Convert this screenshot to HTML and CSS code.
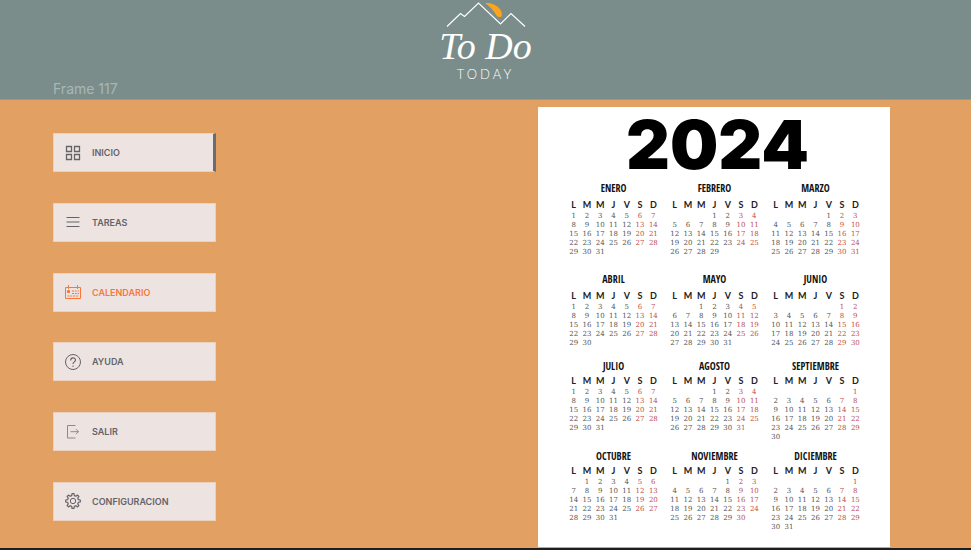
FILE: index.html
```html
<!DOCTYPE html>
<html lang="es">
<head>
<meta charset="utf-8">
<title>To Do Today</title>
<link rel="stylesheet" href="styles.css">
</head>
<body>
<header class="header">
  <span class="frame-label">Frame 117</span>
  <div class="logo">
    <svg class="logo-art" viewBox="0 0 80 26" aria-hidden="true">
      <path d="M39 1C49 0 58 8 55.500 14.500Q52 16 50.500 13.500Q47 7 39 1Z" fill="#fba51c"/>
      <path d="M1 24.500L14.500 11.500L18.500 14.500L32.500 1L54.500 22L65 11.500L79 24.500" fill="none" stroke="#fff" stroke-width="1.200"/>
    </svg>
    <span class="logo-name">To Do</span>
    <span class="logo-sub">TODAY</span>
  </div>
</header>
<main class="main">
  <nav class="nav" aria-label="Principal">
    <a class="nav-link nav-link--marked" href="#inicio">
      <svg class="icon" viewBox="0 0 16 16"><path d="M1.500 1.500h5v5h-5zM9.500 1.500h5v5h-5zM1.500 9.500h5v5h-5zM9.500 9.500h5v5h-5z" stroke-width="1.300"/></svg>INICIO</a>
    <a class="nav-link" href="#tareas">
      <svg class="icon" viewBox="0 0 16 16"><path d="M1.500 3.500h13M1.500 8h13M1.500 12.500h13"/></svg>TAREAS</a>
    <a class="nav-link nav-link--current" href="#calendario" aria-current="page">
      <svg class="icon" viewBox="0 0 16 16"><path d="M.5 3.500h15v11H.5zM3.500 1v4M12.500 1v4"/><path d="M2.500 6.500h2v2h-2z" fill="currentColor"/><path d="M7 7h7M7 9.500h7M2.500 12h11.500" stroke-dasharray="2 .8"/></svg>CALENDARIO</a>
    <a class="nav-link" href="#ayuda">
      <svg class="icon" viewBox="0 0 16 16"><circle cx="8" cy="8" r="7.500"/><path d="M5.700 6.500C5.700 3 10.500 3.200 10.500 6C10.500 8 8 7.800 8 10M8 11.500v1.300" stroke-width="1.200"/></svg>AYUDA</a>
    <a class="nav-link" href="#salir">
      <svg class="icon icon--thin" viewBox="0 0 16 16"><path d="M10.500 1.500h-8v12.500h8M5.500 7.700h8M11 5.200l2.500 2.500L11 10.200"/></svg>SALIR</a>
    <a class="nav-link" href="#configuracion">
      <svg class="icon" viewBox="0 0 16 16"><circle cx="8" cy="8" r="2.700"/><path stroke-linejoin="round" stroke-width="1.200" d="M6.700 2.600L7 .7h2l.3 1.900 1.600.7 1.600-1.200 1.400 1.400-1.200 1.600.7 1.600 1.900.3v2l-1.900.3-.7 1.600 1.200 1.600-1.400 1.400-1.600-1.200-1.600.7L9 15.300H7l-.3-1.900-1.600-.7-1.600 1.200-1.400-1.400 1.200-1.600-.7-1.600L.7 9V7l1.900-.3.7-1.600-1.200-1.600 1.400-1.400 1.600 1.200z"/></svg>CONFIGURACION</a>
  </nav>
  <section class="calendar">
    <h1 class="year">2024</h1>
    <div class="months" id="months"></div>
  </section>
</main>
<script src="calendar.js"></script>
</body>
</html>
```
FILE: styles.css
```css
* {
  box-sizing: border-box;
}

body {
  margin: 0;
  min-height: 100vh;
  display: flex;
  flex-direction: column;
  background: #e2a163;
  border-bottom: 2px solid #1e1e1e;
  font-family: Inter, sans-serif;
}

.header {
  display: grid;
  grid-template-columns: 1fr auto 1fr;
  min-height: 100px;
  padding: 2px 53px 0;
  background: #7a8d8b;
  border-bottom: 1px solid #a3967a;
}

.frame-label {
  align-self: end;
  font-size: 14px;
  line-height: 20px;
  color: #a8b7b5;
}

.logo {
  display: flex;
  flex-direction: column;
  align-items: center;
  color: #fff;
}

.logo-art {
  width: 80px;
  height: 26px;
}

.logo-name {
  font: italic 38px/36px "Liberation Serif", serif;
}

.logo-sub {
  font: 300 13px/20px Lato, sans-serif;
  letter-spacing: 3px;
}

.main {
  flex: 1;
  display: flex;
  justify-content: space-between;
  padding: 7px 81px 1px 53px;
}

.nav {
  display: flex;
  flex-direction: column;
  justify-content: space-between;
  width: 163px;
  padding: 26px 0;
}

.nav-link {
  display: flex;
  align-items: center;
  gap: 11px;
  height: 39px;
  padding-left: 11px;
  background: #ede4e2;
  border: 1px solid #ead0bd;
  color: #646369;
  font-size: 9px;
  font-weight: 600;
  text-decoration: none;
}

.nav-link--marked {
  border-right: 3px solid #6c6b73;
}

.nav-link--current {
  color: #f9763c;
}

.icon {
  width: 16px;
  height: 16px;
  fill: none;
  stroke: currentColor;
}

.icon--thin {
  opacity: 0.7;
}

.calendar {
  width: 352px;
  padding: 5px 28px 0 29px;
  background: #fff;
}

.year {
  margin: 0;
  padding-left: 6px;
  font-size: 68px;
  line-height: 64px;
  font-weight: 900;
  text-align: center;
  color: #000;
}

.months {
  display: grid;
  grid-template-columns: repeat(3, 1fr);
  grid-template-rows: 91px 87px 90px 84px;
  column-gap: 8px;
  padding-top: 6px;
}

.month {
  width: 100%;
  height: 0;
  align-self: start;
  table-layout: fixed;
  border-collapse: collapse;
  font-family: "DejaVu Serif", serif;
}

.month caption {
  height: 15px;
  font: 700 10px/12px "Liberation Sans Narrow", "Open Sans Condensed", "Liberation Sans", sans-serif;
  color: #111;
}

.month th {
  height: 15px;
  padding: 0;
  font: 700 9px/15px Lato, sans-serif;
  color: #222;
}

.month td {
  height: 9px;
  padding: 0;
  font-size: 7px;
  line-height: 9px;
  text-align: center;
  color: #555;
}

.month--compact caption {
  height: 12px;
}

.month--compact th {
  height: 16px;
}

.month .weekend {
  color: #c0504d;
}
```
FILE: calendar.js
```javascript
const YEAR = 2024;
const NAMES = ["ENERO", "FEBRERO", "MARZO", "ABRIL", "MAYO", "JUNIO", "JULIO",
  "AGOSTO", "SEPTIEMBRE", "OCTUBRE", "NOVIEMBRE", "DICIEMBRE"];
const container = document.getElementById("months");

NAMES.forEach((name, month) => {
  const table = document.createElement("table");
  table.className = month < 6 ? "month" : "month month--compact";
  table.createCaption().textContent = name;

  const head = table.createTHead().insertRow();
  for (const letter of "LMMJVSD") {
    const th = document.createElement("th");
    th.scope = "col";
    th.textContent = letter;
    head.append(th);
  }

  const body = table.createTBody();
  const offset = (new Date(YEAR, month, 1).getDay() + 6) % 7;
  const days = new Date(YEAR, month + 1, 0).getDate();
  for (let start = 1 - offset; start <= days; start += 7) {
    const row = body.insertRow();
    for (let i = 0; i < 7; i++) {
      const cell = row.insertCell();
      const day = start + i;
      if (day >= 1 && day <= days) cell.textContent = day;
      if (i > 4) cell.className = "weekend";
    }
  }
  container.append(table);
});
```
